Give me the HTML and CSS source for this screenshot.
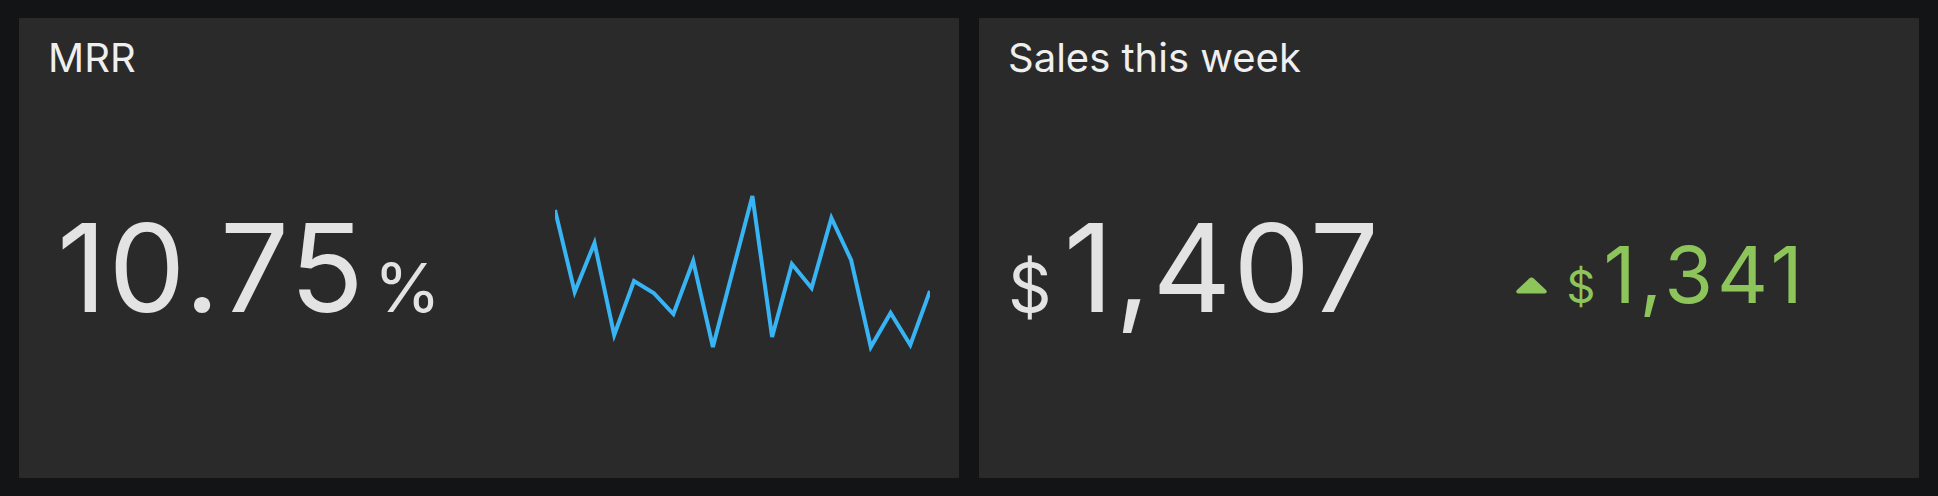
FILE: index.html
```html
<!DOCTYPE html>
<html lang="en">
<head>
    <meta charset="UTF-8">
    <title>Dashboard</title>
    <link rel="stylesheet" href="styles.css">
</head>
<body>
    <div class="board">
        <div class="panel">
            <div class="title">MRR</div>
            <div class="stat-row">
                <div class="stat-main">
                    <span class="value value-first">10.75</span><span class="unit unit-after">%</span>
                </div>
                <svg class="spark" width="375" height="168" viewBox="0 0 375 168">
                    <polyline points="0,22 19.7,104 39.5,55 59.2,147 79,93 98.7,105 118.4,126 138.2,73 157.9,159 177.7,83 197.4,8 217.1,149 236.9,76 256.6,100 276.4,30 296.1,72 315.8,159 335.6,125 355.3,157 375,103"/>
                </svg>
            </div>
        </div>
        <div class="panel">
            <div class="title">Sales this week</div>
            <div class="stat-row">
                <div class="stat-main">
                    <span class="unit unit-before">$</span><span class="value">1,407</span>
                </div>
                <div class="delta">
                    <svg class="arrow" width="33" height="17" viewBox="0 0 33 17">
                        <path d="M14.2 1.6 Q16.5 -0.4 18.8 1.6 L31 13 Q33 15.5 30 16.5 L3 16.5 Q0 15.5 2 13 Z"/>
                    </svg>
                    <span class="delta-unit">$</span><span class="delta-value">1,341</span>
                </div>
            </div>
        </div>
    </div>
</body>
</html>
```

FILE: styles.css
```css
body {
    margin: 0;
    background: #131416;
    font-family: Inter, "Noto Sans", sans-serif;
}

.board {
    display: grid;
    grid-template-columns: 1fr 1fr;
    gap: 20px;
    padding: 18px 19px;
    height: 496px;
    box-sizing: border-box;
}

.panel {
    background: #2a2a2a;
    padding: 15px 28px 0 29px;
}

.title {
    font-size: 40px;
    line-height: 50px;
    color: #efefef;
}

.stat-row {
    display: flex;
    align-items: flex-start;
    height: 168px;
    margin-top: 105px;
}

.stat-main {
    width: 507px;
    flex-shrink: 0;
    margin-top: 19px;
    color: #e3e3e3;
    white-space: nowrap;
}

.value {
    font-size: 122px;
    line-height: 122px;
    letter-spacing: 2px;
}

.value-first {
    margin-left: 9px;
}

.unit {
    font-size: 68px;
}

.unit-after {
    margin-left: 8px;
}

.unit-before {
    margin-right: 12px;
}

.spark polyline {
    fill: none;
    stroke: #38b4f4;
    stroke-width: 4;
}

.delta {
    margin-top: 47px;
    color: #8dc55b;
    white-space: nowrap;
}

.arrow {
    fill: #8dc55b;
    margin-right: 14px;
    vertical-align: 9px;
}

.delta-unit {
    font-size: 45px;
    margin-right: 8px;
}

.delta-value {
    font-size: 79px;
    line-height: 79px;
    letter-spacing: 4px;
}
```
